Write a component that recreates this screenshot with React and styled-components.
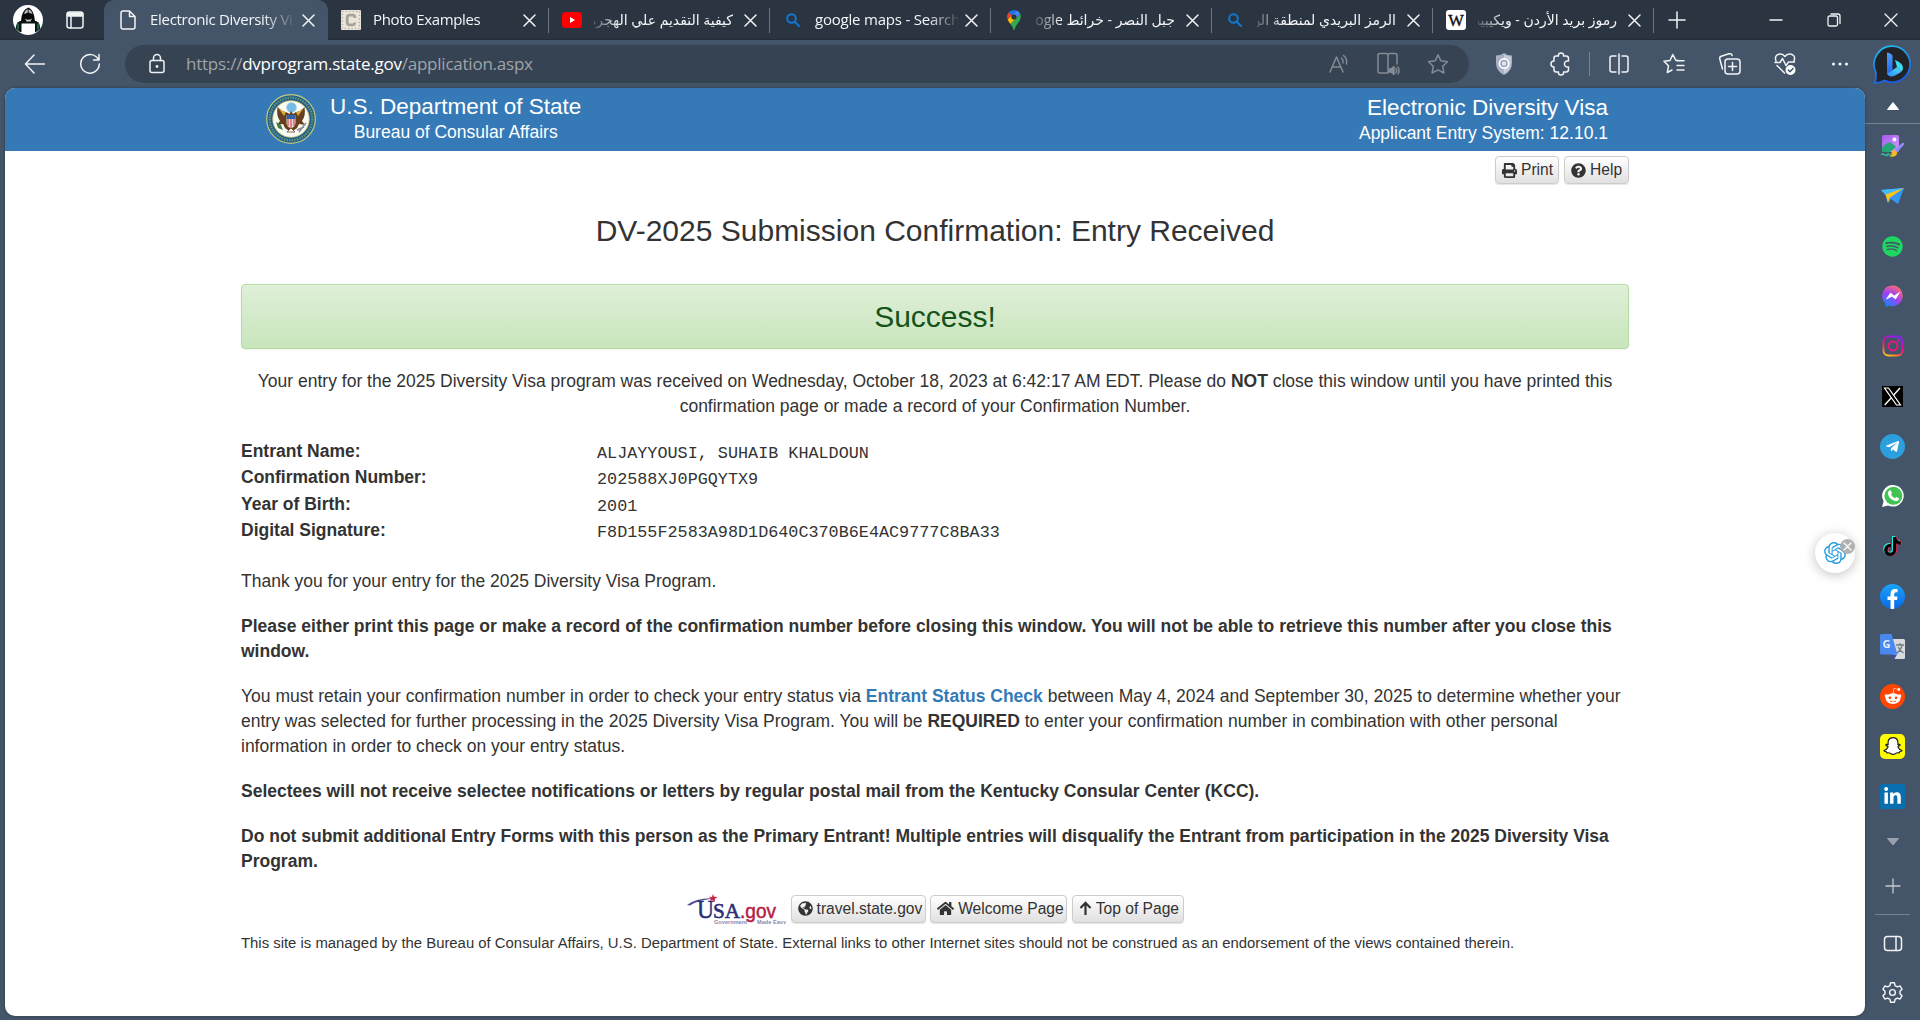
import React from "react";
import styled, { createGlobalStyle, css } from "styled-components";
import { FaPrint, FaQuestionCircle, FaGlobeAmericas, FaHome, FaSpotify, FaTiktok, FaTelegramPlane, FaRedditAlien, FaSnapchatGhost, FaLinkedinIn } from "react-icons/fa";
import { SiOpenai } from "react-icons/si";

const Global = createGlobalStyle`
  *, *::before, *::after { box-sizing: border-box; }
  body { margin: 0; background: #455569; overflow: hidden; }
`;

const ui = css`font-family: "Open Sans", "Noto Sans", "DejaVu Sans", sans-serif;`;

const Browser = styled.div`
  display: flex;
  flex-direction: column;
  width: 1920px;
  height: 1020px;
  background: #455569;
`;

/* ---------- tab strip ---------- */

const TabStrip = styled.header`
  ${ui}
  display: flex;
  align-items: stretch;
  height: 40px;
  background: #2b3541;
  box-shadow: inset 0 -2px 2px -1px #222b35;
`;

const StripTools = styled.div`
  display: flex;
  align-items: center;
  gap: 23px;
  width: 104px;
  padding-left: 13px;
`;

const Tab = styled.div`
  position: relative;
  display: flex;
  align-items: center;
  width: ${(p) => (p.$active ? 224 : 221)}px;
  padding-left: 13px;
  color: #f3f5f7;
  ${(p) =>
    p.$active &&
    css`
      background: #455569;
      border-radius: 10px 10px 0 0;
      padding-left: 14px;
    `}
  ${(p) =>
    p.$divided &&
    css`
      &::after {
        content: "";
        position: absolute;
        right: 0;
        top: 8px;
        width: 1px;
        height: 25px;
        background: #6d7580;
      }
    `}
`;

const Favicon = styled.span`
  display: flex;
  align-items: center;
  justify-content: center;
  width: 20px;
  height: 20px;
  margin-right: 12px;
`;

const TabTitle = styled.span`
  width: 143px;
  height: 24px;
  line-height: 23px;
  overflow: hidden;
  white-space: nowrap;
  font-size: 15px;
  letter-spacing: ${(p) => p.$track || 0}px;
  direction: ${(p) => (p.$rtl ? "rtl" : "ltr")};
  mask-image: linear-gradient(${(p) => (p.$rtl ? "to left" : "to right")}, #000 ${(p) => (p.$fade ? "113px" : "100%")}, transparent 146px);
  ${(p) => p.$rtl && css`font-family: "Open Sans", "DejaVu Sans", sans-serif; font-size: 14px; width: 139px; margin-right: 4px;`}
`;

const CloseMark = styled.span`
  display: flex;
  margin-left: ${(p) => (p.$active ? 9 : 7)}px;
`;

const WindowButtons = styled.div`
  display: flex;
  align-items: center;
  margin-left: auto;
`;

const WindowButton = styled.span`
  display: flex;
  align-items: center;
  justify-content: center;
  width: 57.5px;
`;

const NewTab = styled.span`
  display: flex;
  align-items: center;
  padding-left: 14px;
`;

/* ---------- address bar ---------- */

const Toolbar = styled.nav`
  ${ui}
  display: flex;
  align-items: center;
  height: 48px;
`;

const ToolIcon = styled.span`
  display: flex;
  align-items: center;
  justify-content: center;
  width: ${(p) => p.$w || 55}px;
`;

const UrlBar = styled.div`
  display: flex;
  align-items: center;
  width: 1344px;
  height: 38px;
  margin-left: 7px;
  padding-left: 22px;
  padding-right: 6px;
  border-radius: 19px;
  background: #364353;
`;

const Url = styled.span`
  flex: 1;
  margin-left: 19px;
  padding-bottom: 1px;
  font-size: 17px;
  letter-spacing: -0.23px;
  color: #a0a4a9;
  b { font-weight: 400; color: #fff; }
`;

const ToolDivider = styled.span`
  width: 1px;
  height: 24px;
  margin: 0 1px 0 6px;
  background: #77828f;
`;

/* ---------- page and sidebar ---------- */

const Body = styled.div`
  display: flex;
  flex: 1;
  min-height: 0;
  padding-left: 5px;
`;

const Page = styled.main`
  position: relative;
  width: 1860px;
  height: 928px;
  overflow: hidden;
  border-radius: 10px;
  background: #fff;
  color: #333;
  font-family: "Liberation Sans", Arial, sans-serif;
  font-size: 17.5px;
  line-height: 25px;
  box-shadow: 0 0 3px rgba(20, 30, 40, 0.5);
`;

const Banner = styled.div`
  display: flex;
  height: 63px;
  padding: 6px 257px 0 261px;
  background: #357ab6;
  color: #fff;
`;

const BannerText = styled.div`
  display: flex;
  flex-direction: column;
  align-items: center;
  margin-left: 14px;
  ${(p) => p.$end && css`align-items: flex-end; margin-left: auto; padding-top: 1px;`}
`;

const BannerTitle = styled.span`
  font-size: 22.5px;
  line-height: 26px;
`;

const BannerSub = styled.span`
  font-size: 17.5px;
  line-height: 25px;
`;

const Content = styled.div`
  width: 1388px;
  margin-left: 236px;
`;

const Actions = styled.div`
  display: flex;
  justify-content: flex-end;
  gap: 5px;
  padding-top: 5px;
`;

const Button = styled.button`
  display: flex;
  align-items: center;
  gap: 4px;
  width: ${(p) => p.$w}px;
  height: 28px;
  padding: 0 0 0 6px;
  border: 1px solid #ccc;
  border-radius: 4px;
  background: linear-gradient(#fff, #e0e0e0);
  box-shadow: 0 1px 1px rgba(0, 0, 0, 0.1);
  color: #333;
  font: 15.6px "Liberation Sans", Arial, sans-serif;
  white-space: nowrap;
`;

const Heading = styled.h1`
  margin: 30px 0 0;
  font-size: 30px;
  line-height: 34px;
  font-weight: 400;
  text-align: center;
`;

const Alert = styled.div`
  height: 65px;
  margin-top: 36px;
  border: 1px solid #b2dba1;
  border-radius: 4px;
  background: linear-gradient(#dff0d8, #c8e5bc);
  box-shadow: inset 0 1px 0 rgba(255, 255, 255, 0.25), 0 1px 2px rgba(0, 0, 0, 0.05);
  color: #15531b;
  font-size: 30px;
  line-height: 63px;
  text-align: center;
`;

const Lead = styled.p`
  margin: 20px 0 0;
  text-align: center;
`;

const Fields = styled.dl`
  display: grid;
  grid-template-columns: 356px 1fr;
  grid-auto-rows: 26.4px;
  margin: 20px 0 24.4px;
`;

const Term = styled.dt`
  font-weight: 700;
`;

const Value = styled.dd`
  margin: 0;
  padding-top: 2px;
  font-family: "Liberation Mono", monospace;
  font-size: 16.8px;
`;

const Para = styled.p`
  margin: 0 0 20px;
  font-weight: ${(p) => (p.$strong ? 700 : 400)};
`;

const StatusLink = styled.a`
  color: #337ab7;
  font-weight: 700;
`;

const FooterLinks = styled.div`
  display: flex;
  align-items: center;
  gap: 4.6px;
  padding-left: 446px;
`;

const Disclaimer = styled.p`
  margin: 8px 0 0;
  font-size: 14.88px;
  line-height: 22px;
`;

const Assistant = styled.div`
  position: absolute;
  left: 1810px;
  top: 445px;
  display: flex;
  align-items: center;
  justify-content: center;
  width: 40px;
  height: 40px;
  border-radius: 50%;
  background: #fff;
  color: #2d9fdf;
  box-shadow: 0 2px 12px rgba(0, 0, 0, 0.24);
`;

const Dismiss = styled.span`
  position: absolute;
  right: 0;
  top: 6px;
  display: flex;
  align-items: center;
  justify-content: center;
  width: 15px;
  height: 15px;
  border-radius: 50%;
  background: rgba(170, 170, 170, 0.9);
`;

const Sidebar = styled.aside`
  display: flex;
  flex-direction: column;
  align-items: center;
  width: 55px;
`;

const SideItem = styled.span`
  display: flex;
  align-items: center;
  justify-content: center;
  width: 55px;
  height: ${(p) => p.$h || 50}px;
  flex: none;
`;

const SideRule = styled.span`
  width: ${(p) => p.$w}px;
  height: 1px;
  background: #77828f;
`;

const Badge = styled.span`
  display: flex;
  align-items: center;
  justify-content: center;
  width: 25px;
  height: 25px;
  overflow: hidden;
  border-radius: ${(p) => p.$r || "50%"};
  background: ${(p) => p.$bg};
  color: #fff;
`;

/* ---------- drawings ---------- */

const Line = ({ w = 24, h = w, box, color = "#f1f3f5", sw = 1.5, children }) => (
  <svg width={w} height={h} viewBox={box || `0 0 ${w} ${h}`} fill="none" stroke={color} strokeWidth={sw} strokeLinecap="round" strokeLinejoin="round">
    {children}
  </svg>
);

const Cross = ({ s = 13, color = "#f1f3f5", sw = 1.5 }) => (
  <Line w={s} color={color} sw={sw}>
    <path d={`M1 1L${s - 1} ${s - 1}M${s - 1} 1L1 ${s - 1}`} />
  </Line>
);

const Avatar = () => (
  <svg width="30" height="30" viewBox="0 0 30 30">
    <circle cx="15" cy="15" r="15" fill="#fff" />
    <path d="M3 24Q2.500 18 7 16L23 16Q27.500 18 27 24L23 27H7Z" fill="#0d1512" />
    <path d="M5 18.500v6M25 18.500v6" stroke="#12633f" strokeWidth="2.200" />
    <path d="M8 16Q8.500 5 15.500 2.500Q21 5 22 16Z" fill="#08090a" />
    <path d="M11 9Q12 5 15 4Q18.500 5 19.500 9L15.500 7.500Z" fill="#b9bdc0" />
    <path d="M15.200 4V8" stroke="#222" strokeWidth="1" />
    <path d="M12 13.500Q15 16 19 13.500L17.500 16.500H13.500Z" fill="#c9cccc" />
    <path d="M8.500 18.500H22V27L20 29.200H10.500L8.500 27Z" fill="#fff" />
  </svg>
);

const Workspace = () => (
  <Line w={18}>
    <rect x="1" y="1" width="16" height="16" rx="2.500" />
    <path d="M1.500 2H16.500V5H1.500Z" fill="#f1f3f5" />
    <path d="M5 5V17" />
  </Line>
);

const DocIcon = () => (
  <Line w={16} h={20}>
    <path d="M3 1H9.500L15 6.500V17Q15 19 13 19H3Q1 19 1 17V3Q1 1 3 1ZM9.500 1V6.500H15" />
  </Line>
);

const PhotoFav = () => (
  <svg width="20" height="20" viewBox="0 0 20 20">
    <rect width="20" height="20" rx="1" fill="#e9e5da" />
    <rect x="1.500" y="1.500" width="17" height="17" fill="none" stroke="#aaa69c" strokeWidth="1.200" strokeDasharray="1.200 2.200" />
    <path d="M13.800 8V6.500Q13.500 5.200 12 5.200H8.500Q6.200 5.200 6.200 7.500V12.500Q6.200 14.800 8.500 14.800H12Q13.700 14.800 13.800 12.500" fill="none" stroke="#a7a399" strokeWidth="2.800" />
  </svg>
);

const YouTubeFav = () => (
  <svg width="20" height="18" viewBox="0 0 20 18">
    <rect y="1" width="20" height="16" rx="3.500" fill="#f00" />
    <path d="M8 6L13 9L8 12Z" fill="#fff" />
  </svg>
);

const SearchFav = () => (
  <Line w={14} color="#0f78d4" sw={2}>
    <circle cx="5.500" cy="5.500" r="4.300" />
    <path d="M9 9L13 13" />
  </Line>
);

const MapsFav = () => (
  <svg width="14" height="20" viewBox="0 0 14 20">
    <path d="M7 0A7 7 0 0 0 1.600 2.500L5 5.400L9.500.5Q8.300 0 7 0Z" fill="#1a73e8" />
    <path d="M1.600 2.500Q-.7 5.700.6 9.500L5 5.400Z" fill="#ea4335" />
    <path d="M9.500.5L5 5.400L9 8.500L13.300 4Q12 1.300 9.500.5Z" fill="#4285f4" />
    <path d="M.6 9.500Q1.300 11.300 3.500 14L9 8.500L5 5.400Z" fill="#fbbc04" />
    <path d="M13.300 4L3.500 14Q6 17 6.400 19.500Q7 20.500 7.600 19.500Q8 17 11 13Q15 8 13.300 4Z" fill="#34a853" />
    <circle cx="7" cy="7" r="2.600" fill="#2b3541" />
  </svg>
);

const WikiFav = () => (
  <svg width="20" height="20" viewBox="0 0 20 20">
    <rect width="20" height="20" rx="3" fill="#fff" />
    <text x="10" y="15.500" textAnchor="middle" fontFamily="Liberation Serif, serif" fontSize="16.500" fill="#111" stroke="#111" strokeWidth=".4">W</text>
  </svg>
);

const Star = ({ color }) => (
  <Line w={22} color={color}>
    <path d="M11 1.800L13.900 7.800L20.500 8.700L15.700 13.300L16.900 20L11 16.800L5.100 20L6.300 13.300L1.500 8.700L8.100 7.800Z" />
  </Line>
);

const Shield = () => (
  <svg width="18" height="22" viewBox="0 0 18 22">
    <path d="M9 0Q12.500 2.500 17 2.500V10Q17 18 9 22Q1 18 1 10V2.500Q5.500 2.500 9 0Z" fill="#a9b1c6" />
    <path d="M9 1.500Q12 3.500 15.700 3.600V10Q15.700 17 9 20.500Z" fill="#c9cedd" />
    <circle cx="9" cy="10.500" r="4.600" fill="#9aa3b8" stroke="#fff" strokeWidth="1.600" />
    <circle cx="9" cy="10.500" r="2.200" fill="#dfe3ee" />
  </svg>
);

const Bing = () => (
  <svg width="39" height="39" viewBox="0 0 39 39">
    <defs>
      <linearGradient id="ring" x1=".3" y1="0" x2=".6" y2="1">
        <stop offset="0" stopColor="#22b8f4" />
        <stop offset=".5" stopColor="#1a86ea" />
        <stop offset="1" stopColor="#1b5af0" />
      </linearGradient>
      <linearGradient id="stem" x1="0" y1="0" x2="0" y2="1">
        <stop offset="0" stopColor="#4f9dff" />
        <stop offset="1" stopColor="#1b68ee" />
      </linearGradient>
      <linearGradient id="bowl" x1="0" y1="1" x2="1" y2="0">
        <stop offset="0" stopColor="#2d86fa" />
        <stop offset="1" stopColor="#4be0f5" />
      </linearGradient>
    </defs>
    <path d="M20 1.200A18 18 0 1 1 11.500 35.500Q7 38 1.800 37.800Q3.500 34 2.800 27A18 18 0 0 1 20 1.200Z" fill="#212326" stroke="url(#ring)" strokeWidth="1.700" />
    <path d="M14 7.500Q19 8.500 19.500 11V25L14 29.500Z" fill="url(#stem)" />
    <path d="M22 15Q30.500 18.500 30 23.500Q29.500 25.500 28 27Q27 23.500 24 22Z" fill="#3ddcf2" />
    <path d="M14 28Q15 31.500 18.500 31.500Q21 31.500 28 27Q27 23.500 24 22L19 25.500Q16 28 14 28Z" fill="url(#bowl)" />
  </svg>
);

const Seal = () => (
  <svg width="50" height="50" viewBox="0 0 50 50">
    <circle cx="25" cy="25" r="24.300" fill="#20618c" stroke="#c3ca7c" strokeWidth="1.200" />
    <circle cx="25" cy="25" r="21.300" fill="none" stroke="#6f9578" strokeWidth="2.300" strokeDasharray="1.400 1.200" />
    <circle cx="25" cy="25" r="18.300" fill="#fbfbf6" stroke="#c9bf63" strokeWidth=".8" />
    <circle cx="25.500" cy="13.500" r="4.800" fill="#74bce6" stroke="#8fc4d4" strokeWidth=".8" />
    <path d="M11.500 13Q17 18 20 18L23.500 20L25 17L27 20L30 18Q34 18 38.500 13Q40 22 36 27L39 31L33 30L31 34L27 37H23L19 34L17 30L11 31L14 27Q10 22 11.500 13Z" fill="#68401f" />
    <path d="M11.500 13Q17 18 20 18L18 22ZM38.500 13Q34 18 30 18L32 22Z" fill="#d8ac3d" />
    <path d="M20.500 21.500H29.500V29Q29 33 25 34.500Q21 33 20.500 29Z" fill="#ead5d5" />
    <path d="M22 25V32M25 25V34M28 25V32" stroke="#d66b72" strokeWidth="1.500" />
    <path d="M20.500 21H29.500V25H20.500Z" fill="#2e65aa" />
    <path d="M10 28L15 31L17 36L12 34Z" fill="#3f7d43" />
    <path d="M33 38L40 29M31 36L38 33" stroke="#8d8f92" strokeWidth="1.600" />
    <path d="M21 38L25 34L29 38Z" fill="#fff" stroke="#6a4522" strokeWidth=".8" />
  </svg>
);

const UsaGov = () => (
  <svg width="99" height="30" viewBox="0 0 99 30">
    <path d="M0 11Q10 3 30 4.500Q13 5 3 11.500Z" fill="#4d4e8c" />
    <path d="M26 0L27 2.800L30.500 3L27.800 4.800L28 8L25.500 6L23 7L24 4.300L21.500 2.800L25 3Z" fill="#d5203c" />
    <text x="10" y="24" fontFamily="Liberation Serif, serif" fontSize="25" fill="#2d2e78" stroke="#2d2e78" strokeWidth=".5" textLength="17" lengthAdjust="spacingAndGlyphs">U</text>
    <text x="26" y="24" fontFamily="Liberation Serif, serif" fontSize="22" fill="#2d2e78" stroke="#2d2e78" strokeWidth=".6" textLength="27" lengthAdjust="spacingAndGlyphs">SA</text>
    <text x="53" y="23.500" fontFamily="Liberation Sans, sans-serif" fontSize="21" fill="#b71c46" stroke="#b71c46" strokeWidth=".5" textLength="36" lengthAdjust="spacingAndGlyphs">.gov</text>
    <text x="27" y="29.500" fontFamily="Liberation Sans, sans-serif" fontWeight="700" fontSize="5.500" fill="#8587b1" textLength="33">Government</text>
    <text x="70" y="29.500" fontFamily="Liberation Sans, sans-serif" fontWeight="700" fontSize="5.500" fill="#8587b1" textLength="29">Made Easy</text>
  </svg>
);

const ArrowUp = () => (
  <Line w={13} h={15} color="#333" sw={2.2}>
    <path d="M6.500 14V2M1.500 7L6.500 1.800L11.500 7" strokeLinecap="butt" strokeLinejoin="miter" />
  </Line>
);

const Designer = () => (
  <svg width="25" height="24" viewBox="0 0 25 24">
    <defs>
      <linearGradient id="sheet" x1="0" y1="0" x2="1" y2="1">
        <stop offset="0" stopColor="#a45bea" />
        <stop offset="1" stopColor="#d29bff" />
      </linearGradient>
    </defs>
    <rect x="2" y="1" width="17" height="17" rx="2" fill="url(#sheet)" />
    <circle cx="14.500" cy="5.500" r="1.900" fill="#fff" />
    <path d="M2 14Q6 8.500 9.500 8.500Q12 8.500 16 13L10 18H4Q2 18 2 16Z" fill="#23a873" />
    <path d="M1 20.500Q3.500 19.500 5 21Q6.500 22.500 8 20Q9 19.500 11 22.500" fill="none" stroke="#2ac391" strokeWidth="1.500" />
    <path d="M21.500 9.500Q24 8 24.300 9.500Q24.500 10.500 22 13L17 18.500L14.500 16Z" fill="#8e8df5" />
    <path d="M14.500 16L17.200 18.500Q17 23.500 10 22.500Q12 21.500 11.500 19Q12 16.500 14.500 16Z" fill="#f8b820" />
  </svg>
);

const Plane = () => (
  <svg width="23" height="16" viewBox="0 0 23 16">
    <path d="M0 2L23 0L17 16L10 11L7 15L5 8Z" fill="#3498f2" />
    <path d="M0 2L23 0L6 8Z" fill="#46baf8" />
    <path d="M4.500 6.500L23 0L8.500 10L7 15Z" fill="#fcc21f" />
  </svg>
);

const Messenger = () => (
  <svg width="22" height="22" viewBox="0 0 22 22">
    <defs>
      <radialGradient id="msg" cx=".2" cy="1" r="1.100">
        <stop offset="0" stopColor="#0a8dff" />
        <stop offset=".6" stopColor="#a040f5" />
        <stop offset="1" stopColor="#ff6a72" />
      </radialGradient>
    </defs>
    <path d="M11 .5A10.300 10.300 0 1 1 7 20.500L3.500 22L3.700 18.500A10.300 10.300 0 0 1 11 .5Z" fill="url(#msg)" />
    <path d="M4.500 14L8.500 8L12 11L17.500 7.500L13.500 14L10 11.200Z" fill="#fff" stroke="#fff" strokeWidth=".8" />
  </svg>
);

const Instagram = () => (
  <svg width="22" height="22" viewBox="0 0 22 22" fill="none">
    <defs>
      <linearGradient id="ig" x1=".2" y1="1" x2=".6" y2="0">
        <stop offset="0" stopColor="#ffc21a" />
        <stop offset=".35" stopColor="#ff2b5c" />
        <stop offset=".65" stopColor="#e40aa8" />
        <stop offset="1" stopColor="#8b20f5" />
      </linearGradient>
    </defs>
    <rect x="1.500" y="1.500" width="19" height="19" rx="5" stroke="url(#ig)" strokeWidth="1.800" />
    <circle cx="11" cy="11" r="4.500" stroke="#f0147c" strokeWidth="1.800" />
    <circle cx="16.500" cy="5.500" r="1.200" fill="#c81ad0" />
  </svg>
);

const XLogo = () => (
  <svg width="21" height="21" viewBox="0 0 21 21">
    <rect width="21" height="21" fill="#000" />
    <path d="M18 2L11.500 9.200M9.300 11.800L2.700 19" stroke="#fff" strokeWidth="1.400" />
    <path d="M2.500 2H6.500L18.500 19H14.500Z" fill="#000" stroke="#fff" strokeWidth="1.200" />
  </svg>
);

const WhatsApp = () => (
  <svg width="24" height="24" viewBox="0 0 24 24">
    <path d="M12.500 1A10.800 10.800 0 1 1 7 21.400L1 23L2.600 17.200A10.800 10.800 0 0 1 12.500 1Z" fill="#fff" />
    <circle cx="12.400" cy="11.800" r="9" fill="#3fc351" />
    <path d="M8.200 6.500Q9.800 5.800 10.200 7.300L10.900 9Q10.700 10 10 10.600Q11.500 13.400 14 14.200L15.200 12.900L18 14.300Q18 17 14.900 17.200Q7.400 15.600 6.900 9.500Q6.900 7.500 8.200 6.500Z" fill="#fff" />
  </svg>
);

const TikTokStack = styled.span`
  display: flex;
  filter: drop-shadow(-1px -0.8px 0 #25e5df) drop-shadow(1px 0.8px 0 #fb2855);
`;

const Facebook = () => (
  <svg width="25" height="25" viewBox="0 0 25 25">
    <path d="M10.500 25V16H7.500V12.500H10.500V10Q10.500 5 15.200 5H17.500V8.200H16Q14.200 8.200 14.200 10V12.500H17.500L17 16H14.200V25Z" fill="#fff" />
  </svg>
);

const Translate = () => (
  <svg width="25" height="25" viewBox="0 0 25 25">
    <path d="M10 5H23.500Q25 5 25 6.500V23.500Q25 25 23.500 25H14.500Z" fill="#d9dadc" />
    <path d="M16 11H24M20 9V11M22 11Q21 16 17 19M18 13Q20 17 23.500 19" fill="none" stroke="#727f83" strokeWidth="1.300" />
    <path d="M12 20.500H17L14.500 25Z" fill="#3a4dbb" />
    <path d="M1.500 0H11.500L17.500 20.500H1.500Q0 20.500 0 19V1.500Q0 0 1.500 0Z" fill="#4a87ee" />
    <text x="2.600" y="14" fontFamily="Open Sans, sans-serif" fontSize="11" fontWeight="700" fill="#e6efff">G</text>
  </svg>
);

const Gear = () => (
  <Line w={23} box="0 0 24 24" sw={1.5}>
    <circle cx="12" cy="12" r="3" />
    <path d="M9.300 4.800L10 1.800H14L14.700 4.800L17 6.100L20 5.200L22 8.700L19.800 10.800V13.200L22 15.300L20 18.800L17 17.900L14.700 19.200L14 22.200H10L9.300 19.200L7 17.900L4 18.800L2 15.300L4.200 13.200V10.800L2 8.700L4 5.200L7 6.100Z" />
  </Line>
);

const tabs = [
  { icon: <PhotoFav />, title: "Photo Examples", track: -0.37 },
  { icon: <YouTubeFav />, title: "كيفية التقديم علي الهجرة", rtl: true, fade: true },
  { icon: <SearchFav />, title: "google maps - Search", fade: true, track: -0.2 },
  { icon: <MapsFav />, title: "جبل النصر - خرائط Google", rtl: true, fade: true },
  { icon: <SearchFav />, title: "الرمز البريدي لمنطقة الن", rtl: true, fade: true },
  { icon: <WikiFav />, title: "رموز بريد الأردن - ويكيبيديا", rtl: true, fade: true },
];

const fields = [
  ["Entrant Name:", "ALJAYYOUSI, SUHAIB KHALDOUN"],
  ["Confirmation Number:", "202588XJ0PGQYTX9"],
  ["Year of Birth:", "2001"],
  ["Digital Signature:", "F8D155F2583A98D1D640C370B6E4AC9777C8BA33"],
];

const apps = [
  <Plane />,
  <FaSpotify size={21} color="#1ed760" />,
  <Messenger />,
  <Instagram />,
  <XLogo />,
  <Badge $bg="#2ba0dc"><FaTelegramPlane size={15} /></Badge>,
  <WhatsApp />,
  <TikTokStack><FaTiktok size={19} color="#000" /></TikTokStack>,
  <Badge $bg="linear-gradient(#19a4fb,#0b68e6)"><Facebook /></Badge>,
  <Translate />,
  <Badge $bg="#ff4500"><FaRedditAlien size={18} /></Badge>,
  <Badge $bg="#fffc00" $r="5px"><FaSnapchatGhost size={18} stroke="#222" strokeWidth={34} overflow="visible" /></Badge>,
  <Badge $bg="#0a6fae" $r="2px"><FaLinkedinIn size={19} /></Badge>,
];

const dim = "#848b94";

export default function App() {
  return (
    <Browser>
      <Global />
      <TabStrip>
        <StripTools>
          <Avatar />
          <Workspace />
        </StripTools>
        <Tab $active>
          <Favicon><DocIcon /></Favicon>
          <TabTitle $fade $track={-0.3}>Electronic Diversity Visa</TabTitle>
          <CloseMark $active><Cross /></CloseMark>
        </Tab>
        {tabs.map((t, i) => (
          <Tab key={i} $divided>
            <Favicon>{t.icon}</Favicon>
            <TabTitle $rtl={t.rtl} $fade={t.fade} $track={t.track}>{t.title}</TabTitle>
            <CloseMark><Cross /></CloseMark>
          </Tab>
        ))}
        <NewTab>
          <Line w={18}><path d="M9 1V17M1 9H17" /></Line>
        </NewTab>
        <WindowButtons>
          <WindowButton><Line w={14} h={4}><path d="M1 2H13" /></Line></WindowButton>
          <WindowButton>
            <Line w={14} sw={1.3}>
              <rect x="1" y="3" width="9.500" height="10" rx="1.500" />
              <path d="M4 1H11Q13 1 13 3V10.500" />
            </Line>
          </WindowButton>
          <WindowButton><Cross s={14} sw={1.3} /></WindowButton>
        </WindowButtons>
      </TabStrip>

      <Toolbar>
        <ToolIcon $w={70}>
          <Line w={22}><path d="M20.500 11H1.500M10 2L1.500 11L10 20" /></Line>
        </ToolIcon>
        <ToolIcon $w={40}>
          <Line w={22}><path d="M19.500 7A9.300 9.300 0 1 0 20.300 11M20 1.500V7H14.500" /></Line>
        </ToolIcon>
        <ToolIcon $w={8} />
        <UrlBar>
          <Line w={20} h={22}>
            <rect x="3" y="7.500" width="14" height="12" rx="2" />
            <path d="M6.500 7.500V5A3.500 3.500 0 0 1 13.500 5V7.500" />
            <circle cx="10" cy="13.500" r=".7" fill="#fff" />
          </Line>
          <Url>https://<b>dvprogram.state.gov</b>/application.aspx</Url>
          <ToolIcon $w={49}>
            <Line w={22} h={20} color={dim}>
              <path d="M2 18L8.500 3L15 18M4.500 13H12.500M13.500 4Q15.500 6 15 9M15.500 1.500Q19.500 4.500 18.500 10" />
            </Line>
          </ToolIcon>
          <ToolIcon $w={50}>
            <Line w={23} h={24} color={dim}>
              <path d="M11 21H3Q1 21 1 19V3Q1 1.500 3 1.500H9Q11 1.500 11 3.500V21M11 3.500Q11 1.500 13 1.500H18Q20 1.500 20 3.500V12" />
              <path d="M12 17H14L17 14.500V22.500L14 20H12Z" fill={dim} />
              <path d="M19 16.500Q20.300 18.500 19 20.500M21 15Q23 18.500 21 22" />
            </Line>
          </ToolIcon>
          <ToolIcon $w={50}><Star color={dim} /></ToolIcon>
        </UrlBar>
        <ToolIcon $w={69}><Shield /></ToolIcon>
        <ToolIcon $w={45}>
          <Line w={22} h={24}>
            <path d="M5.500 4H8.500Q8 1 11 1Q14 1 13.500 4H16Q18.500 4 18.500 6.500V9Q14.500 8.500 14.500 12Q14.500 15.500 18.500 15V17.500Q18.500 20 16 20H13.500Q14 23 11 23Q8 23 8.500 20H6Q4 20 4 17.500V15Q1 15 1 12Q1 9 4 9V6Q4 4 6 4" />
          </Line>
        </ToolIcon>
        <ToolDivider />
        <ToolIcon>
          <Line w={22}><path d="M8 3H4Q2 3 2 5V17Q2 19 4 19H8M14 3H18Q20 3 20 5V17Q20 19 18 19H14M11 1V21" /></Line>
        </ToolIcon>
        <ToolIcon>
          <Line w={22}>
            <path d="M15.500 7.500H13L9.800 1.500L7 7.500L1 8.300L5.500 12.800L4.300 19.500L9 17M14 7.800H21M14 12.500H21M14 17H21" />
          </Line>
        </ToolIcon>
        <ToolIcon $w={57}>
          <Line w={23} h={24}>
            <rect x="7" y="7" width="15" height="15" rx="3" />
            <path d="M14.500 10.500V18.500M10.500 14.500H18.500M4.500 17L1.800 7Q1.400 5 3.200 4.300L11 1.800Q13.500 1.200 14.200 3.500" />
          </Line>
        </ToolIcon>
        <ToolIcon>
          <Line w={23} h={24}>
            <path d="M2 9Q0 3 5.500 2Q9 1.500 11 4.500Q13 1.500 16.500 2Q22 3 20 9M1 10.500H6L8.500 6.500L12 13.500L14.500 10H20.500M3 13.500L10.500 21" />
            <circle cx="16.500" cy="18" r="5" fill="#fff" stroke="none" />
            <path d="M14.300 18L16 19.700L19 16.500" stroke="#455569" />
          </Line>
        </ToolIcon>
        <ToolIcon $w={54}>
          <Line w={18} h={4} sw={0}>
            <g fill="#f1f3f5"><circle cx="2.500" cy="2" r="1.600" /><circle cx="9" cy="2" r="1.600" /><circle cx="15.500" cy="2" r="1.600" /></g>
          </Line>
        </ToolIcon>
        <ToolIcon $w={51}><Bing /></ToolIcon>
      </Toolbar>

      <Body>
        <Page>
          <Banner>
            <Seal />
            <BannerText>
              <BannerTitle>U.S. Department of State</BannerTitle>
              <BannerSub>Bureau of Consular Affairs</BannerSub>
            </BannerText>
            <BannerText $end>
              <BannerTitle>Electronic Diversity Visa</BannerTitle>
              <BannerSub>Applicant Entry System: 12.10.1</BannerSub>
            </BannerText>
          </Banner>
          <Content>
            <Actions>
              <Button $w={64}><FaPrint size={15} />Print</Button>
              <Button $w={65}><FaQuestionCircle size={15} />Help</Button>
            </Actions>
            <Heading>DV-2025 Submission Confirmation: Entry Received</Heading>
            <Alert>Success!</Alert>
            <Lead>
              Your entry for the 2025 Diversity Visa program was received on Wednesday, October 18, 2023 at 6:42:17 AM EDT. Please do <b>NOT</b> close this window until you have printed this confirmation page or made a record of your Confirmation Number.
            </Lead>
            <Fields>
              {fields.map(([k, v]) => (
                <React.Fragment key={k}>
                  <Term>{k}</Term>
                  <Value>{v}</Value>
                </React.Fragment>
              ))}
            </Fields>
            <Para>Thank you for your entry for the 2025 Diversity Visa Program.</Para>
            <Para $strong>Please either print this page or make a record of the confirmation number before closing this window. You will not be able to retrieve this number after you close this window.</Para>
            <Para>
              You must retain your confirmation number in order to check your entry status via <StatusLink>Entrant Status Check</StatusLink> between May 4, 2024 and September 30, 2025 to determine whether your entry was selected for further processing in the 2025 Diversity Visa Program. You will be <b>REQUIRED</b> to enter your confirmation number in combination with other personal information in order to check on your entry status.
            </Para>
            <Para $strong>Selectees will not receive selectee notifications or letters by regular postal mail from the Kentucky Consular Center (KCC).</Para>
            <Para $strong>Do not submit additional Entry Forms with this person as the Primary Entrant! Multiple entries will disqualify the Entrant from participation in the 2025 Diversity Visa Program.</Para>
            <FooterLinks>
              <UsaGov />
              <Button $w={135}><FaGlobeAmericas size={15} />travel.state.gov</Button>
              <Button $w={137}><FaHome size={17} />Welcome Page</Button>
              <Button $w={112}><ArrowUp />Top of Page</Button>
            </FooterLinks>
            <Disclaimer>This site is managed by the Bureau of Consular Affairs, U.S. Department of State. External links to other Internet sites should not be construed as an endorsement of the views contained therein.</Disclaimer>
          </Content>
          <Assistant>
            <SiOpenai size={22} />
            <Dismiss><Cross s={9} color="#fff" sw={1.2} /></Dismiss>
          </Assistant>
        </Page>
        <Sidebar>
          <SideItem $h={35}><svg width="12" height="8" viewBox="0 0 12 8"><path d="M6 .5L11.500 7.500H.5Z" fill="#fff" stroke="#fff" strokeLinejoin="round" /></svg></SideItem>
          <SideRule $w={55} />
          <SideItem $h={44}><Designer /></SideItem>
          <SideItem $h={3} />
          {apps.map((a, i) => (
            <SideItem key={i}>{a}</SideItem>
          ))}
          <SideItem $h={41}><svg width="12" height="8" viewBox="0 0 12 8"><path d="M.5.5H11.500L6 7Z" fill="#9aa0ab" stroke="#9aa0ab" /></svg></SideItem>
          <SideItem $h={47}><Line w={16} color="#c3c9d0" sw={1.3}><path d="M8 1V15M1 8H15" /></Line></SideItem>
          <SideItem $h={10}><SideRule $w={35} /></SideItem>
          <SideItem $h={48}><Line w={20} h={17}><rect x="1.500" y="1.500" width="17" height="14" rx="3" /><path d="M13 1.500V15.500" /></Line></SideItem>
          <SideItem $h={51}><Gear /></SideItem>
        </Sidebar>
      </Body>
    </Browser>
  );
}
